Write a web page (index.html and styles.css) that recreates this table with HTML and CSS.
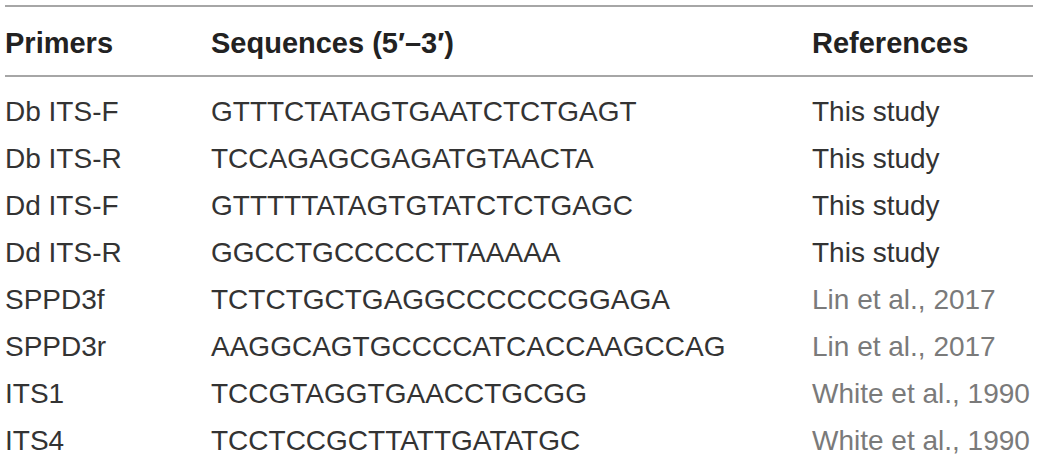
FILE: index.html
```html
<!DOCTYPE html>
<html>
<head>
<meta charset="utf-8">
<link rel="stylesheet" href="styles.css">
</head>
<body>
<div class="table">
  <div class="row head">
    <div>Primers</div>
    <div>Sequences (5′–3′)</div>
    <div>References</div>
  </div>
  <div class="body">
    <div class="row"><div>Db ITS-F</div><div>GTTTCTATAGTGAATCTCTGAGT</div><div>This study</div></div>
    <div class="row"><div>Db ITS-R</div><div>TCCAGAGCGAGATGTAACTA</div><div>This study</div></div>
    <div class="row"><div>Dd ITS-F</div><div>GTTTTTATAGTGTATCTCTGAGC</div><div>This study</div></div>
    <div class="row"><div>Dd ITS-R</div><div>GGCCTGCCCCCTTAAAAA</div><div>This study</div></div>
    <div class="row"><div>SPPD3f</div><div>TCTCTGCTGAGGCCCCCCGGAGA</div><div class="cite">Lin et al., 2017</div></div>
    <div class="row"><div>SPPD3r</div><div>AAGGCAGTGCCCCATCACCAAGCCAG</div><div class="cite">Lin et al., 2017</div></div>
    <div class="row"><div>ITS1</div><div>TCCGTAGGTGAACCTGCGG</div><div class="cite">White et al., 1990</div></div>
    <div class="row"><div>ITS4</div><div>TCCTCCGCTTATTGATATGC</div><div class="cite">White et al., 1990</div></div>
  </div>
</div>
</body>
</html>
```
FILE: styles.css
```css
html, body {
  margin: 0;
  padding: 0;
  background: #fff;
}
body {
  font-family: "Liberation Sans", Arial, sans-serif;
  font-size: 28px;
  color: #333;
  padding: 5px 0 0 5px;
}
.table {
  width: 1028px;
  border-top: 2px solid #a6a6a6;
}
.row {
  display: grid;
  grid-template-columns: 206px 601px 1fr;
  line-height: 47px;
  height: 47px;
  white-space: nowrap;
}
.row.head {
  font-size: 29px;
  font-weight: bold;
  color: #222;
  padding: 13px 0 8px;
  border-bottom: 2px solid #a6a6a6;
}
.body {
  padding-top: 11px;
}
.cite {
  color: #7a7a7a;
}
```
